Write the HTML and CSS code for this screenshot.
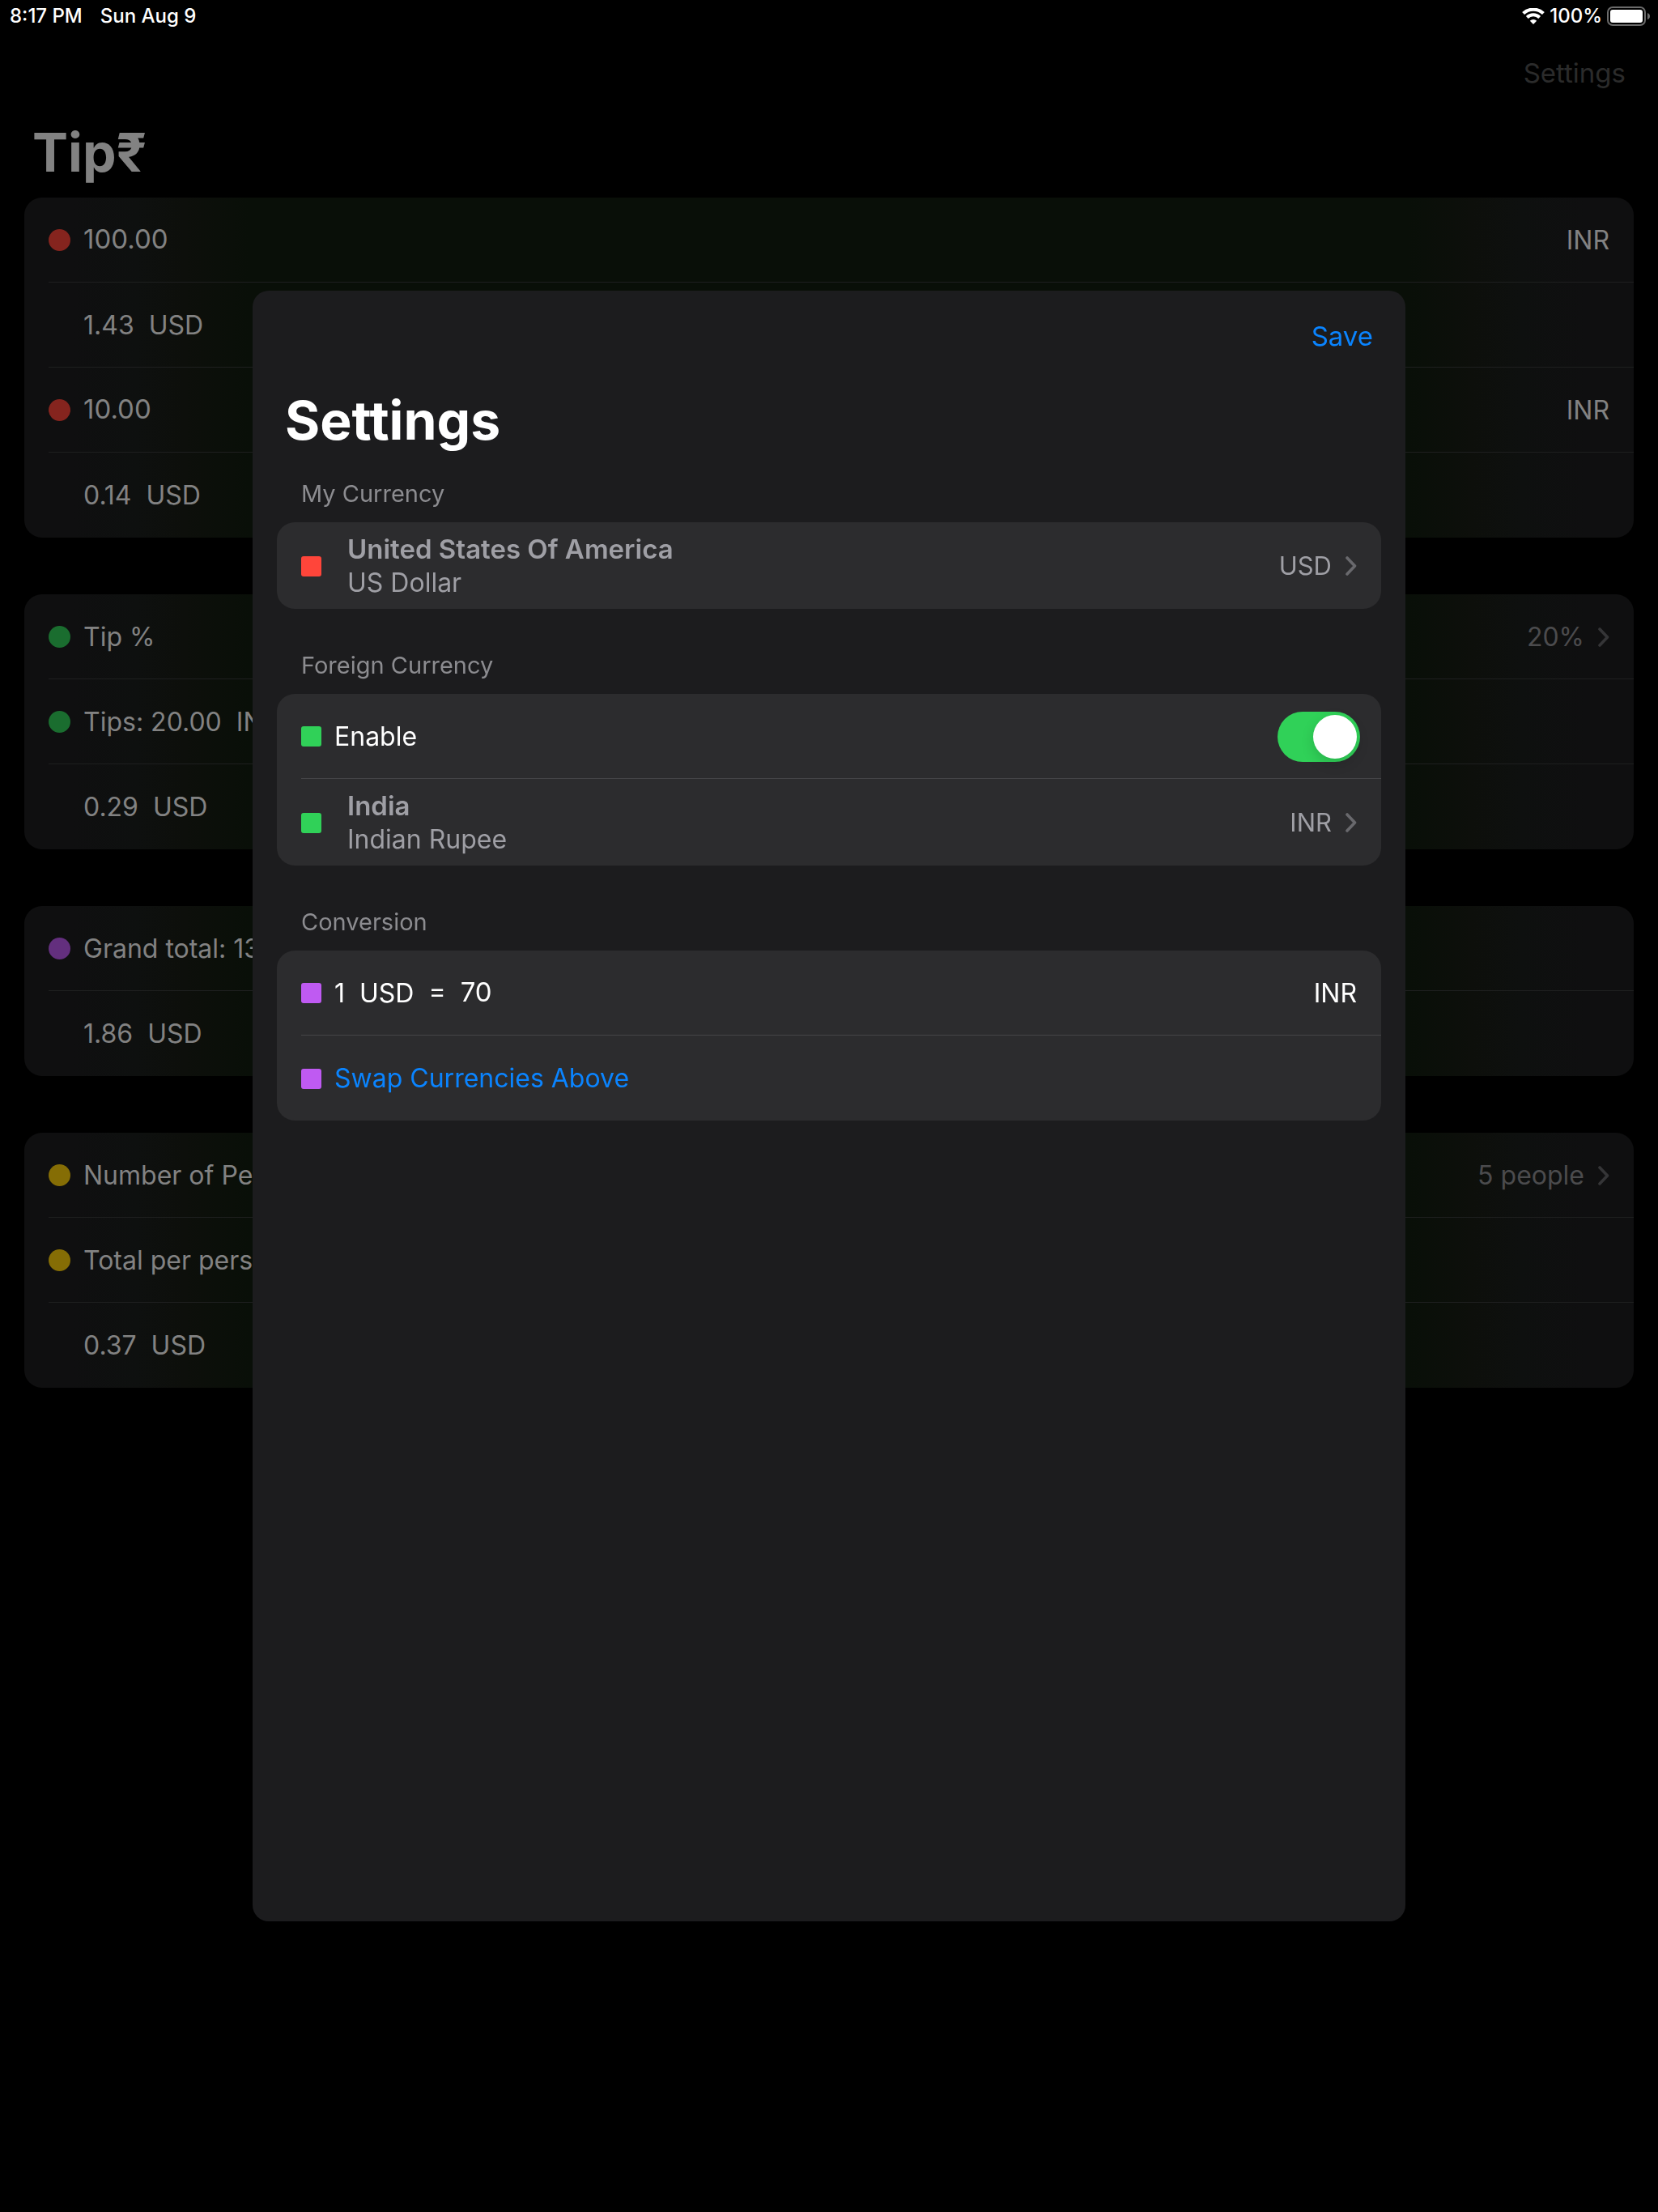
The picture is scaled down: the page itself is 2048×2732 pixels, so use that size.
FILE: index.html
```html
<!DOCTYPE html>
<html lang="en">
<head>
<meta charset="utf-8">
<meta name="viewport" content="width=device-width, initial-scale=1">
<title>Tip₹</title>
<link rel="stylesheet" href="styles.css">
</head>
<body>
<svg class="sprite" aria-hidden="true">
  <symbol id="chevron" viewBox="0 0 14 24">
    <path d="M2 2 L11.500 12 L2 22" fill="none" stroke="currentColor" stroke-width="3.600" stroke-linecap="round" stroke-linejoin="round"/>
  </symbol>
</svg>

<header class="status">
  <span class="status-group status-left"><span>8:17 PM</span><span>Sun Aug 9</span></span>
  <span class="status-group">
    <svg class="wifi" viewBox="0 0 28 20" aria-label="Wi-Fi">
      <path d="M1.600 6.600 A18 18 0 0 1 26.400 6.600" fill="none" stroke="#fff" stroke-width="4.200"/>
      <path d="M6.300 11.500 A11 11 0 0 1 21.700 11.500" fill="none" stroke="#fff" stroke-width="4"/>
      <path d="M14 20 L9.800 15.800 A6 6 0 0 1 18.200 15.800 Z" fill="#fff"/>
    </svg>
    <span>100%</span>
    <svg class="battery" viewBox="0 0 54 24" aria-label="Battery full">
      <rect x="1" y="1" width="46" height="22" rx="6" fill="none" stroke="#6b6b6b" stroke-width="2"/>
      <rect x="4" y="4" width="40" height="16" rx="3" fill="#fff"/>
      <path d="M50 8 Q53 9 53 12 Q53 15 50 16 Z" fill="#6b6b6b"/>
    </svg>
  </span>
</header>

<main class="page">
  <nav class="nav page-nav"><button class="nav-button" type="button" disabled>Settings</button></nav>
  <h1 class="title">Tip₹</h1>

  <section class="card">
    <div class="row"><i class="dot red"></i><input class="field" id="bill" value="100.00" aria-label="Bill amount"><label for="bill">INR</label></div>
    <div class="row indent">1.43  USD</div>
    <div class="row"><i class="dot red"></i><input class="field" id="tax" value="10.00" aria-label="Tax amount"><label for="tax">INR</label></div>
    <div class="row indent">0.14  USD</div>
  </section>

  <section class="card">
    <button class="row" type="button"><i class="dot green"></i><span class="grow">Tip %</span><span class="value">20%</span><svg class="chevron"><use href="#chevron"/></svg></button>
    <div class="row"><i class="dot green"></i>Tips: 20.00  INR</div>
    <div class="row indent">0.29  USD</div>
  </section>

  <section class="card">
    <div class="row"><i class="dot purple"></i>Grand total: 130.00  INR</div>
    <div class="row indent">1.86  USD</div>
  </section>

  <section class="card">
    <button class="row" type="button"><i class="dot yellow"></i><span class="grow">Number of People</span><span class="value">5 people</span><svg class="chevron"><use href="#chevron"/></svg></button>
    <div class="row"><i class="dot yellow"></i>Total per person: 26.00  INR</div>
    <div class="row indent">0.37  USD</div>
  </section>
</main>

<div class="layer">
  <div class="sheet" role="dialog" aria-labelledby="sheet-title">
    <nav class="nav sheet-nav"><button class="nav-button" type="button">Save</button></nav>
    <h2 class="title" id="sheet-title">Settings</h2>

    <h3 class="caption caption-first">My Currency</h3>
    <section class="card">
      <button class="row row-tall" type="button">
        <i class="chip red"></i>
        <span class="detail"><strong>United States Of America</strong><span>US Dollar</span></span>
        <span class="code">USD</span><svg class="chevron"><use href="#chevron"/></svg>
      </button>
    </section>

    <h3 class="caption">Foreign Currency</h3>
    <section class="card">
      <div class="row row-switch">
        <i class="chip green"></i>
        <label class="grow" for="enable">Enable</label>
        <input class="switch" id="enable" type="checkbox" role="switch" checked>
      </div>
      <button class="row row-tall" type="button">
        <i class="chip green"></i>
        <span class="detail"><strong>India</strong><span>Indian Rupee</span></span>
        <span class="code">INR</span><svg class="chevron"><use href="#chevron"/></svg>
      </button>
    </section>

    <h3 class="caption">Conversion</h3>
    <section class="card">
      <div class="row"><i class="chip purple"></i><label for="rate">1  USD  =</label><input class="field rate" id="rate" value="70"><span>INR</span></div>
      <button class="row action" type="button"><i class="chip purple"></i>Swap Currencies Above</button>
    </section>
  </div>
</div>
</body>
</html>
```

FILE: styles.css
```css
* { box-sizing: border-box; }

body {
  margin: 0;
  min-height: 100vh;
  background: #000;
  color: #828282;
  font-family: Inter, "Liberation Sans", sans-serif;
  font-size: 32px;
  line-height: 40px;
}

button, input {
  font: inherit;
  color: inherit;
  background: none;
  border: 0;
  padding: 0;
  margin: 0;
  text-align: left;
}

h1, h2, h3 { margin: 0; }

.sprite { display: none; }

/* Status bar */
.status {
  display: flex;
  justify-content: space-between;
  height: 40px;
  padding: 0 9px 0 12px;
  color: #fff;
  font-size: 24px;
  font-weight: 500;
}
.status-group { display: flex; align-items: center; gap: 6px; }
.status-left { gap: 22px; }
.wifi { width: 28px; height: 20px; }
.battery { width: 54px; height: 24px; }

/* Page */
.page { padding: 0 30px 40px; }
.nav {
  display: flex;
  justify-content: flex-end;
  font-size: 33px;
}
.page-nav { padding: 30px 10px 38px; color: #2b2b2b; }
.nav-button { color: inherit; }
.title {
  font-size: 66px;
  font-weight: 700;
  line-height: 80px;
}
.page > .title { padding: 0 10px 16px; }
.page .card + .card { margin-top: 70px; }

/* Cards and rows */
.card {
  padding-left: 30px;
  border-radius: 22px;
  --line: #1e1f1f;
}
.page .card {
  background: linear-gradient(90deg,
    #0f0f10 3%, #0e100f 7%, #0d0f0b 10%, #090f08 14%,
    #090f08 86%, #0d0f0b 90%, #0e100f 93%, #0f0f10 97%);
}
.row {
  display: flex;
  align-items: center;
  width: 100%;
  min-height: 105px;
  padding-top: 1px;
  padding-right: 30px;
  border-bottom: 1px solid var(--line);
  white-space: pre;
}
.row:last-child { border-bottom: 0; }
.indent { padding-left: 43px; }
.grow { flex: 1; }
.value { color: #4b4b4d; }
.chevron {
  width: 14px;
  height: 24px;
  margin-left: 17px;
  color: #353537;
}
.field {
  flex: 1;
  min-width: 0;
  padding-bottom: 3px;
  font-size: 33px;
  outline: 0;
}
.dot {
  width: 27px;
  height: 27px;
  margin-right: 16px;
  border-radius: 50%;
}
.dot.red { background: #85241e; }
.dot.green { background: #1a6d2f; }
.dot.purple { background: #632f7e; }
.dot.yellow { background: #856d05; }

/* Settings sheet */
.layer {
  position: fixed;
  inset: 0;
  display: grid;
  place-items: center;
}
.sheet {
  width: 100%;
  max-width: 1424px;
  height: 100%;
  max-height: 2014px;
  padding: 0 30px;
  border-radius: 20px;
  background: #1c1c1e;
  color: #fff;
  overflow: auto;
}
.sheet-nav {
  padding: 36px 10px 44px;
  color: #0a84ff;
}
.sheet > .title { padding: 0 10px; }
.caption {
  padding: 52px 30px 17px;
  color: #8c8c90;
  font-size: 29px;
  font-weight: 400;
  line-height: 36px;
}
.caption-first { padding-top: 33px; }
.sheet .card {
  background: #2c2c2e;
  --line: #444447;
}
.chip {
  width: 25px;
  height: 25px;
  margin-right: 16px;
  border-radius: 3px;
}
.chip.red { background: #ff453a; }
.chip.green { background: #30d158; }
.chip.purple { background: #bf5af2; }
.row-tall { min-height: 107px; color: #9f9fa5; }
.detail {
  display: flex;
  flex: 1;
  flex-direction: column;
  padding-left: 16px;
  line-height: 41px;
}
.detail strong { font-size: 33px; font-weight: 600; }
.code { font-size: 31px; }
.sheet .chevron { color: #69696d; }
.row-switch { padding-right: 26px; }
.switch {
  appearance: none;
  width: 102px;
  height: 62px;
  padding: 4px;
  border-radius: 31px;
  background: #39393d;
}
.switch::before {
  content: "";
  display: block;
  width: 54px;
  height: 54px;
  border-radius: 50%;
  background: #fff;
  box-shadow: 0 6px 16px rgba(0, 0, 0, 0.15);
}
.switch:checked { background: #30d158; }
.switch:checked::before { margin-left: auto; }
.rate { margin-left: 18px; }
.action { color: #0a84ff; }
```
